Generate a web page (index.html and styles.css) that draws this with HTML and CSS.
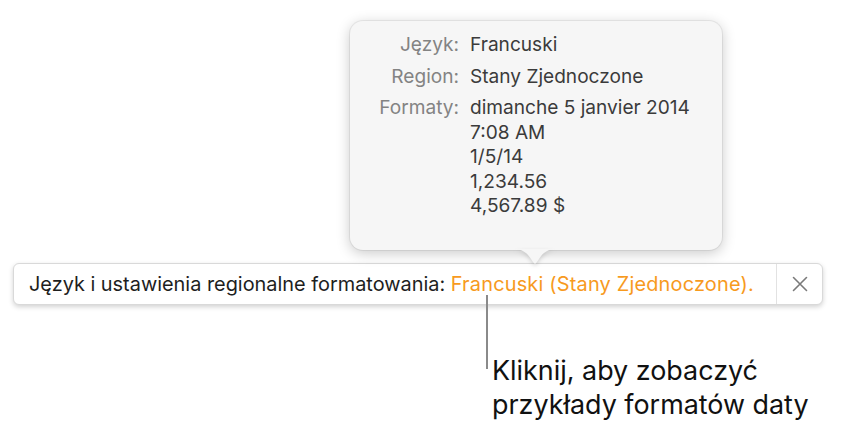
FILE: index.html
```html
<!DOCTYPE html>
<html lang="pl">
<head>
<meta charset="utf-8">
<link rel="stylesheet" href="styles.css">
</head>
<body>
<div class="stage">
  <div class="popover">
    <div class="grid">
      <div class="label">Język:</div>
      <div class="value">Francuski</div>
      <div class="label">Region:</div>
      <div class="value">Stany Zjednoczone</div>
      <div class="label">Formaty:</div>
      <div class="value formats">
        <span>dimanche 5 janvier 2014</span>
        <span>7:08 AM</span>
        <span>1/5/14</span>
        <span>1,234.56</span>
        <span>4,567.89 $</span>
      </div>
    </div>
    <svg class="arrow" width="44" height="18" viewBox="0 0 44 18"><path d="M0 0 C 9 0, 13 3, 17 8.5 L 20.4 13.6 Q 22 15.8 23.6 13.6 L 27 8.5 C 31 3, 35 0, 44 0 Z" fill="#f6f6f6"/></svg>
  </div>
  <div class="bar">
    <div class="bar-text">Język i ustawienia regionalne formatowania: <span class="accent">Francuski (Stany Zjednoczone).</span></div>
    <div class="close">
      <svg width="16" height="16" viewBox="0 0 16 16"><path d="M1.5 1.5 L14.5 14.5 M14.5 1.5 L1.5 14.5" stroke="#7a7a7a" stroke-width="1.6" fill="none" stroke-linecap="round"/></svg>
    </div>
  </div>
  <div class="callout">
    <div class="callout-line"></div>
    <div class="callout-text">Kliknij, aby zobaczyć<br>przykłady formatów daty</div>
  </div>
</div>
</body>
</html>
```
FILE: styles.css
```css
html, body {
  margin: 0;
  padding: 0;
  background: #ffffff;
}
body {
  font-family: Inter, "Liberation Sans", sans-serif;
  width: 844px;
  height: 430px;
  overflow: hidden;
}
.stage {
  padding-top: 21px;
  display: flex;
  flex-direction: column;
}
.popover {
  position: relative;
  z-index: 2;
  margin-left: 350px;
  width: 372px;
  height: 229px;
  box-sizing: border-box;
  background: #f6f6f6;
  border-radius: 13px;
  box-shadow: 0 0 0 1px rgba(0,0,0,0.06), 0 3px 14px rgba(0,0,0,0.22);
  padding-top: 11px;
}
.arrow {
  position: absolute;
  left: 163px;
  top: 228px;
  display: block;
  filter: drop-shadow(0 2px 2px rgba(0,0,0,0.15));
}
.grid {
  display: grid;
  grid-template-columns: 109px auto;
  column-gap: 11px;
  row-gap: 7px;
  font-size: 19.1px;
  line-height: 24.5px;
}
.label {
  text-align: right;
  color: #838383;
}
.value {
  color: #3b3b3b;
}
.formats {
  display: flex;
  flex-direction: column;
}
.bar {
  margin-top: 13px;
  margin-left: 13px;
  width: 810px;
  height: 42px;
  box-sizing: border-box;
  background: #ffffff;
  border: 1px solid #d9d9d9;
  border-radius: 6px;
  box-shadow: 0 2px 5px rgba(0,0,0,0.18);
  display: flex;
  align-items: center;
}
.bar-text {
  flex: 1;
  padding-left: 15px;
  font-size: 19.9px;
  color: #1e1e1e;
  white-space: nowrap;
}
.accent {
  color: #f79a1e;
  letter-spacing: 0.2px;
}
.close {
  width: 45px;
  height: 100%;
  border-left: 1px solid #e2e2e2;
  display: flex;
  align-items: center;
  justify-content: center;
}
.callout {
  margin-top: -10px;
  margin-left: 486px;
  display: flex;
  align-items: flex-start;
  position: relative;
}
.callout-line {
  width: 2px;
  height: 74px;
  background: #8a8a8a;
}
.callout-text {
  margin-top: 58px;
  margin-left: 4px;
  font-size: 26.9px;
  line-height: 34px;
  color: #111111;
}
```
